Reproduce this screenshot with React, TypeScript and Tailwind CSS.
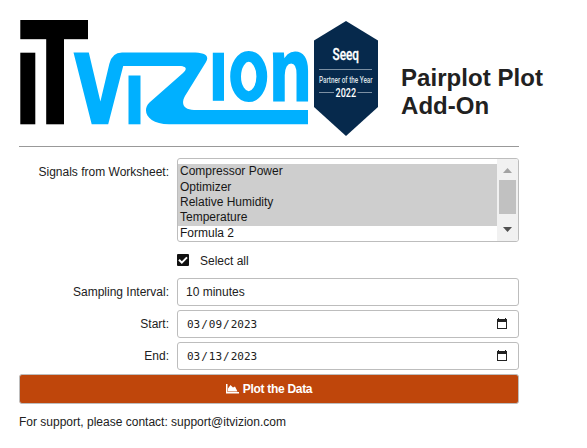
import React from "react";

const signals = [
  { name: "Compressor Power", selected: true, height: "h-[16px]" },
  { name: "Optimizer", selected: true, height: "h-[15px]" },
  { name: "Relative Humidity", selected: true, height: "h-[15px]" },
  { name: "Temperature", selected: true, height: "h-[16px]" },
  { name: "Formula 2", selected: false, height: "h-[15px]" },
];

function Logo() {
  return (
    <svg width="290" height="118" viewBox="20 20 290 118" className="block shrink-0" aria-label="ITvizion">
      <g fill="#000">
        <rect x="20.3" y="20" width="67.7" height="19.2" />
        <rect x="46.2" y="38" width="17.8" height="86.3" />
        <rect x="20.3" y="52.7" width="15" height="71.6" />
      </g>
      <g fill="#00b0ff">
        <path d="M73.500 52.600H88.800L100.400 101.500L109.300 64Q112 52.600 122 52.600H192C204 52.600 210 55 206 62L185 96C180.500 104 184 110 194 110H308V124.300H169C148 124.300 141 111 149.500 102.500L183 73C188 68 186 66 178 66H123.200L108.200 124.300H91.700Z" />
        <rect x="128.500" y="75.500" width="12" height="48.800" />
        <rect x="212.800" y="52.700" width="11.200" height="48.100" />
      </g>
      <ellipse cx="248.700" cy="76.500" rx="13.100" ry="20.200" fill="none" stroke="#00b0ff" strokeWidth="10.800" />
      <text transform="translate(269.500 99.500) scale(.785 1)" fill="#00b0ff" stroke="#00b0ff" strokeWidth="2.800" fontWeight="700" fontSize="87" fontFamily="'Liberation Sans', Arial, sans-serif">n</text>
    </svg>
  );
}

function Badge() {
  return (
    <svg width="66" height="118" viewBox="313 20 66 118" className="ml-[3px] block shrink-0">
      <path d="M346 21L378 40.500V107L346 136L314 107V40.500Z" fill="#06294c" />
      <g stroke="#9aabba" strokeWidth="0.8">
        <path d="M319 69.500H372M319 92.500H334M357.500 92.500H372" />
      </g>
      <g fill="#fff" fontFamily="Roboto, sans-serif">
        <text x="332.500" y="60" fontSize="17" fontWeight="500" stroke="#fff" strokeWidth="0.3" textLength="26.500" lengthAdjust="spacingAndGlyphs">Seeq</text>
        <text x="319" y="83" fontSize="9.500" fontWeight="500" textLength="53.500" lengthAdjust="spacingAndGlyphs" fill="#dce2e8">Partner of the Year</text>
        <text x="335.500" y="97" fontSize="12" fontWeight="500" textLength="20.500" lengthAdjust="spacingAndGlyphs">2022</text>
      </g>
    </svg>
  );
}

function Row({ label, children }: { label: string; children: React.ReactNode }) {
  return (
    <div className="mb-1 flex h-7 items-center">
      <div className="w-[158px] shrink-0 pr-2 text-right">{label}</div>
      <div className="flex h-7 w-[342px] items-center rounded-[3px] border border-[#bdbdbd] px-2">{children}</div>
    </div>
  );
}

function DateValue({ parts }: { parts: string[] }) {
  return (
    <>
      <div className="flex pl-px font-['DejaVu_Sans_Mono',monospace] text-[11px]">
        <span>{parts[0]}</span>
        <span className="w-[8.6px] text-center">/</span>
        <span>{parts[1]}</span>
        <span className="w-[8.6px] text-center">/</span>
        <span>{parts[2]}</span>
      </div>
      <svg width="10" height="11" viewBox="0 0 10 11" className="mr-[3px] mb-px ml-auto">
        <path d="M1 0h1v1h6V0h1v1h1v10H0V1h1Z M1 4v6h8V4Z" fill="#222" fillRule="evenodd" />
      </svg>
    </>
  );
}

export default function App() {
  return (
    <main className="h-[448px] w-[587px] overflow-hidden bg-white pt-5 pl-[19px] font-['Liberation_Sans',Arial,sans-serif] text-[12px] leading-[15px] text-[#212121]">
      <header className="flex h-[118px] pl-px">
        <Logo />
        <Badge />
        <h1 className="mt-[43.500px] ml-[22px] w-[170px] text-[24px] leading-7 font-bold tracking-[0.05px]">
          <span className="block whitespace-nowrap">Pairplot Plot</span>
          <span className="block">Add-On</span>
        </h1>
      </header>

      <div className="mt-2 mb-[11px] h-px w-[500px] bg-[#999]" />

      <section className="flex h-[84px] w-[500px]">
        <div className="mt-[7px] w-[158px] pr-2 text-right">Signals from Worksheet:</div>
        <div className="flex w-[342px] overflow-hidden rounded-[3px] border border-[#bdbdbd]">
          <div className="flex-1 pt-[5px] text-[#171717]">
            {signals.map((s) => (
              <div key={s.name} className={`${s.height} pl-[2px] leading-[15px] ${s.selected ? "bg-[#cecece]" : ""}`}>
                {s.name}
              </div>
            ))}
          </div>
          <div className="flex w-[21px] flex-col items-center bg-[#f1f1f1] pt-[9px]">
            <svg width="9" height="5" viewBox="0 0 9 5"><path d="M0 5L4.500 0L9 5Z" fill="#a3a3a3" /></svg>
            <div className="mt-[7px] h-[34px] w-[17px] bg-[#c1c1c1]" />
            <svg className="mt-[13px]" width="9" height="5" viewBox="0 0 9 5"><path d="M0 0L4.500 5L9 0Z" fill="#505050" /></svg>
          </div>
        </div>
      </section>

      <div className="flex h-9 items-center pl-[158px]">
        <svg width="12" height="12" viewBox="0 0 12 12">
          <rect width="12" height="12" rx="1" fill="#111" />
          <path d="M2 5.800L4.800 8.600L10 3.400" fill="none" stroke="#fff" strokeWidth="2" />
        </svg>
        <span className="mt-[3px] ml-[11px]">Select all</span>
      </div>

      <Row label="Sampling Interval:"><span>10 minutes</span></Row>
      <Row label="Start:"><DateValue parts={["03", "09", "2023"]} /></Row>
      <Row label="End:"><DateValue parts={["03", "13", "2023"]} /></Row>

      <button className="flex h-[30px] w-[500px] items-center justify-center rounded-[3px] border border-[#bdbdbd] bg-[#bf460b] font-bold tracking-[-0.3px] text-white">
        <svg width="13" height="10" viewBox="0 0 13 10" className="mr-1">
          <path d="M0 0H1.500V8H13V9.500H0ZM2 7.500V4.500L4.500 1L7 3.500L9 2.500L11.500 7.500Z" fill="#fff" />
        </svg>
        Plot the Data
      </button>
      <footer className="mt-[11px]">For support, please contact: support@itvizion.com</footer>
    </main>
  );
}
